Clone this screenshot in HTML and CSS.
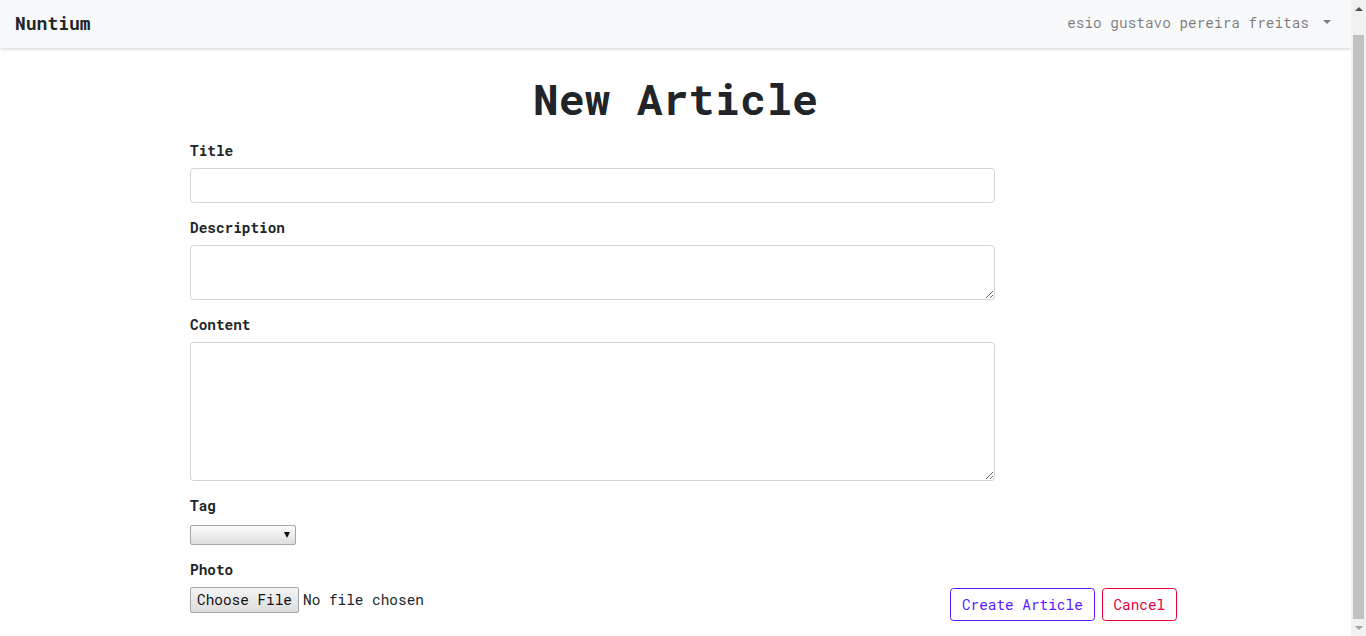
FILE: index.html
```html
<!DOCTYPE html>
<html lang="en">
<head>
<meta charset="utf-8">
<title>Nuntium - New Article</title>
<link rel="stylesheet" href="styles.css">
</head>
<body>
<nav class="navbar">
  <a class="brand" href="#">Nuntium</a>
  <a class="user" href="#">esio gustavo pereira freitas<span class="caret"></span></a>
</nav>
<main class="page">
  <h1 class="heading">New Article</h1>
  <form class="form">
    <div class="group">
      <label class="label" for="title">Title</label>
      <input class="control" id="title" type="text">
    </div>
    <div class="group">
      <label class="label" for="description">Description</label>
      <textarea class="control area-sm" id="description"></textarea>
    </div>
    <div class="group">
      <label class="label" for="content">Content</label>
      <textarea class="control area-lg" id="content"></textarea>
    </div>
    <div class="group">
      <label class="label" for="tag">Tag</label>
      <div class="select-wrap"><select class="select" id="tag"><option></option></select></div>
    </div>
    <div class="group last">
      <label class="label label-photo" for="photo">Photo</label>
      <div class="photo-row">
        <input class="file" id="photo" type="file">
        <div class="actions">
          <button class="btn btn-primary" type="submit">Create Article</button>
          <button class="btn btn-danger" type="button">Cancel</button>
        </div>
      </div>
    </div>
  </form>
</main>
<div class="scrollbar" aria-hidden="true">
  <span class="sb-arrow sb-up"></span>
  <span class="sb-track"><span class="sb-thumb"></span></span>
  <span class="sb-arrow sb-down"></span>
</div>
</body>
</html>
```

FILE: styles.css
```css
* { box-sizing: border-box; }
html, body { margin: 0; padding: 0; overflow: hidden; }
body {
  margin-right: 15px;
  font-family: "Roboto Mono", "DejaVu Sans Mono", "Liberation Mono", monospace;
  font-size: 14.4px;
  line-height: 1.5;
  color: #212529;
  background: #fff;
}
a { text-decoration: none; }

.navbar {
  height: 48px;
  background: #f8f9fa;
  display: flex;
  align-items: center;
  justify-content: space-between;
  padding: 0 20px 0 15px;
  box-shadow: 0 1px 3px rgba(60, 30, 60, 0.22);
  position: relative;
  z-index: 1;
}
.brand {
  font-size: 18px;
  font-weight: 700;
  color: #212529;
  line-height: 1.5;
  margin-top: -2px;
}
.user {
  color: rgba(0, 0, 0, 0.5);
  display: flex;
  align-items: center;
  margin-top: -2px;
}
.caret {
  display: inline-block;
  margin-left: 14px;
  width: 0;
  height: 0;
  border-top: 4.5px solid rgba(0, 0, 0, 0.5);
  border-left: 4px solid transparent;
  border-right: 4px solid transparent;
  margin-top: -2px;
}

.page {
  padding: 25px 0 20px;
}
.heading {
  margin: 0 0 15px;
  text-align: center;
  font-size: 43.2px;
  font-weight: 700;
  line-height: 1.2;
}
.form {
  margin-left: 190px;
  width: 987px;
}
.group { margin-bottom: 14px; }
.group.last { margin-bottom: 0; }
.label {
  display: block;
  font-weight: 700;
  line-height: 21px;
  margin-bottom: 7px;
}
.label-photo { margin-bottom: 7px; }
.control {
  display: block;
  width: 805px;
  height: 35px;
  padding: 5.4px 10.8px;
  font: inherit;
  color: #495057;
  background: #fff;
  border: 1px solid #ced4da;
  border-radius: 3.6px;
}
.area-sm { height: 55px; resize: vertical; }
.area-lg { height: 139px; resize: vertical; }

.select-wrap {
  position: relative;
  width: 106px;
  padding: 2px 0 0;
}
.select {
  appearance: none;
  -webkit-appearance: none;
  display: block;
  width: 106px;
  height: 20px;
  margin: 0;
  padding: 0 4px;
  font: 13px "Roboto Mono", monospace;
  border: 1px solid #a6a6a6;
  border-radius: 2px;
  background: linear-gradient(#fbfbfb, #dedede);
}
.select-wrap::after {
  content: "";
  position: absolute;
  right: 6px;
  top: 9px;
  border-top: 6px solid #111;
  border-left: 3.5px solid transparent;
  border-right: 3.5px solid transparent;
  pointer-events: none;
}

.photo-row {
  display: flex;
  justify-content: space-between;
  align-items: flex-start;
}
.file {
  font: inherit;
  color: #212529;
  height: 26px;
  margin: 0;
}
.file::file-selector-button {
  font: inherit;
  height: 26px;
  margin: 0 4px 0 0;
  padding: 0 6px;
  color: #111;
  background: linear-gradient(#f4f4f4, #dddddd);
  border: 1px solid #a6a6a6;
  border-radius: 2px;
}
.actions {
  display: flex;
  gap: 7px;
  margin-top: 1px;
}
.btn {
  font: inherit;
  line-height: 21px;
  padding: 5px 10.8px;
  background: transparent;
  border-radius: 3.6px;
  cursor: pointer;
}
.btn-primary { color: #5a1aff; border: 1px solid #5a1aff; }
.btn-danger { color: #e6003c; border: 1px solid #e6003c; }

/* decorative replica of the browser's scrollbar */
.scrollbar {
  position: fixed;
  top: 0;
  right: 0;
  width: 15px;
  height: 100%;
  background: #f1f1f1;
  display: flex;
  flex-direction: column;
}
.sb-arrow {
  height: 17px;
  display: flex;
  align-items: center;
  justify-content: center;
}
.sb-arrow::before {
  content: "";
  border-left: 4px solid transparent;
  border-right: 4px solid transparent;
}
.sb-up::before { border-bottom: 4px solid #505050; }
.sb-down::before { border-top: 4px solid #a3a3a3; }
.sb-track {
  flex: 1;
  display: flex;
  flex-direction: column;
  padding: 18px 2px 0;
}
.sb-thumb {
  flex: 1;
  background: #c1c1c1;
}
```
